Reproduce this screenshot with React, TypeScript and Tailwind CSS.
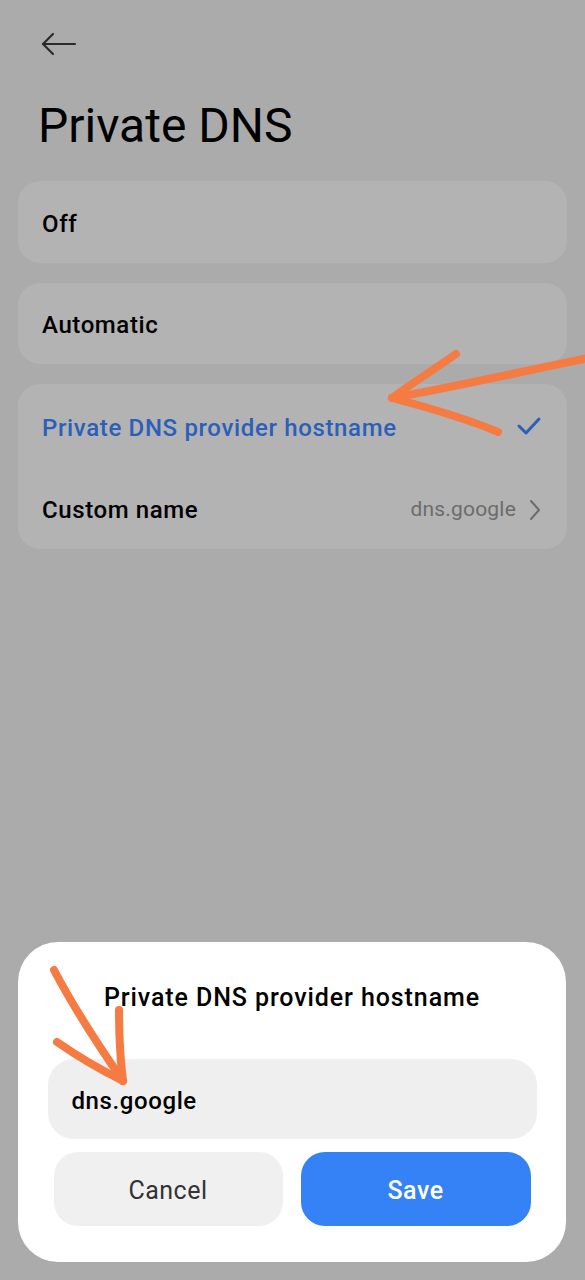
const font = { fontFamily: "Roboto, 'Noto Sans', sans-serif" };

function BackArrow() {
  return (
    <svg width="36" height="24" viewBox="0 0 36 24" fill="none" stroke="#2b2b2b" strokeWidth="2.2" strokeLinecap="round" strokeLinejoin="round">
      <path d="M2 12h32" />
      <path d="M12 2L2 12l10 10" />
    </svg>
  );
}

function Check() {
  return (
    <svg width="26" height="20" viewBox="0 0 26 20" fill="none" stroke="#2c5fb9" strokeWidth="3" strokeLinecap="round" strokeLinejoin="round">
      <path d="M3 10l7 7L23 3" />
    </svg>
  );
}

function Chevron() {
  return (
    <svg width="12" height="22" viewBox="0 0 12 22" fill="none" stroke="#6c6c6c" strokeWidth="2" strokeLinecap="round" strokeLinejoin="round">
      <path d="M2 2l8 9-8 9" />
    </svg>
  );
}

export default function App() {
  return (
    <div className="relative w-[585px] h-[1280px] overflow-hidden bg-[#ababab] text-black" style={font}>
      <div className="flex flex-col">
        <div className="pl-[41px] pt-[32px] h-[80px]">
          <BackArrow />
        </div>
        <h1 className="pl-[38px] mt-[19px] text-[48px] leading-[54px] font-normal">Private DNS</h1>

        <div className="mt-[28px] mx-[18px] flex flex-col gap-[20px]">
          <div className="h-[82px] rounded-[22px] bg-[#b3b3b3] flex items-center px-[24px] pt-[3px]">
            <span className="text-[24px] font-medium tracking-[0.6px]">Off</span>
          </div>
          <div className="h-[81px] rounded-[22px] bg-[#b3b3b3] flex items-center px-[24px] pt-[3px]">
            <span className="text-[24px] font-medium tracking-[0.6px]">Automatic</span>
          </div>
          <div className="h-[165px] rounded-[22px] bg-[#b3b3b3] flex flex-col px-[24px]">
            <div className="h-[84px] flex items-center justify-between pt-[3px]">
              <span className="text-[24px] font-medium tracking-[0.65px] text-[#2c5fb9]">Private DNS provider hostname</span>
              <span className="mr-[1px] -mt-[3px]"><Check /></span>
            </div>
            <div className="h-[81px] flex items-center justify-between pt-[3px]">
              <span className="text-[24px] font-medium tracking-[0.6px]">Custom name</span>
              <div className="flex items-center gap-[13px] mr-[2px]">
                <span className="text-[21px] tracking-[0.2px] text-[#6c6c6c]">dns.google</span>
                <Chevron />
              </div>
            </div>
          </div>
        </div>
      </div>

      <div className="absolute left-[18px] top-[942px] w-[548px] h-[320px] rounded-[40px] bg-white flex flex-col items-center">
        <div className="mt-[40px] text-[25px] font-medium tracking-[0.9px] leading-[32px]">Private DNS provider hostname</div>
        <div className="mt-[45px] w-[489px] h-[80px] rounded-[26px] bg-[#efefef] flex items-center px-[24px] pt-[3px]">
          <span className="text-[24px] font-medium tracking-[0.6px]">dns.google</span>
        </div>
        <div className="mt-[13px] w-[477px] flex justify-between">
          <button className="w-[229px] h-[74px] rounded-[24px] bg-[#f0f0f0] pt-[3px] text-[25px] tracking-[0.5px] text-[#333]">Cancel</button>
          <button className="w-[230px] h-[74px] rounded-[24px] bg-[#3581f6] pt-[3px] text-[25px] tracking-[0.5px] font-medium text-white">Save</button>
        </div>
      </div>

      <svg className="absolute inset-0 pointer-events-none" width="585" height="1280" viewBox="0 0 585 1280" fill="none" stroke="#f67b43" strokeWidth="8" strokeLinecap="round" strokeLinejoin="round">
        <path d="M588 358C520 372 450 388 392 398" />
        <path d="M456 354C430 372 405 388 392 398C430 408 470 420 498 432" />
        <path d="M54 970C75 1010 105 1055 123 1081" />
        <path d="M119 1010C119 1040 121 1065 123 1081" />
        <path d="M57 1042C80 1058 105 1072 123 1081" />
      </svg>
    </div>
  );
}
